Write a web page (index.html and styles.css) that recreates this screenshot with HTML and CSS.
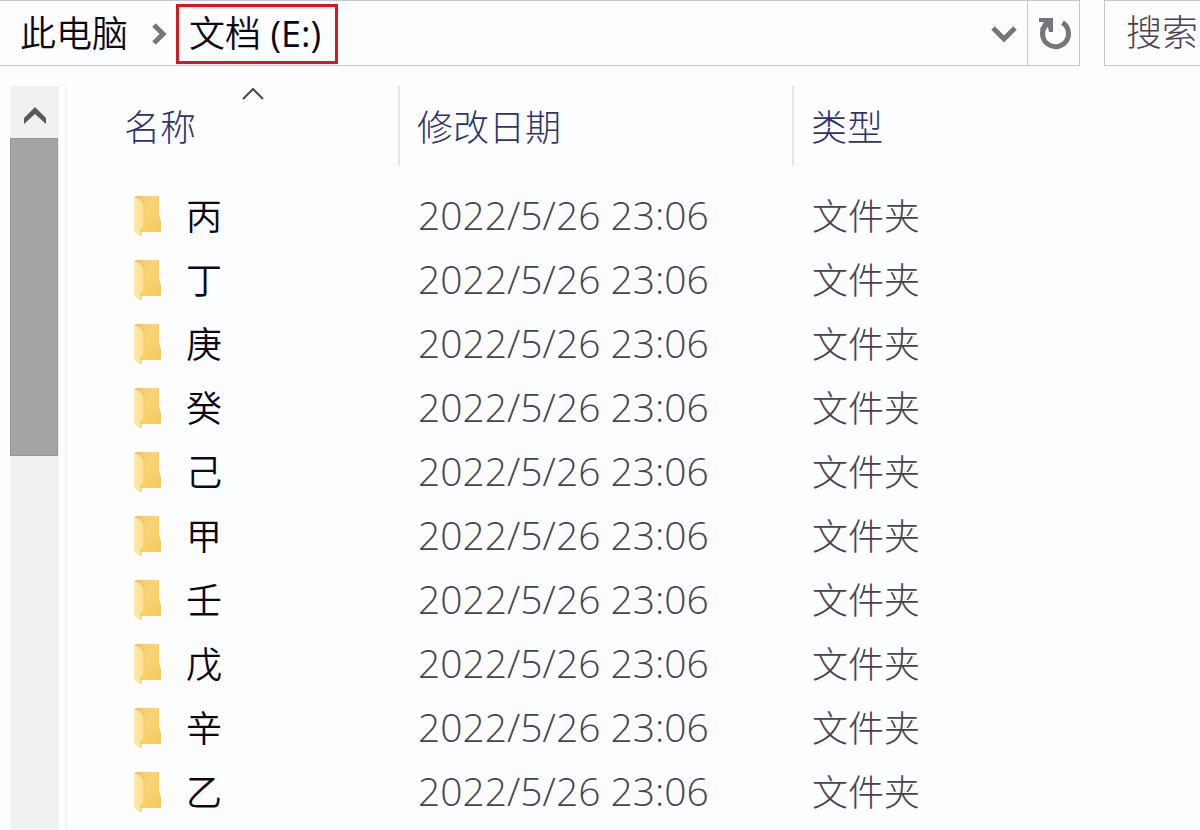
FILE: index.html
```html
<!DOCTYPE html>
<html lang="zh-CN">
<head>
<meta charset="utf-8">
<title>文档 (E:)</title>
<link rel="stylesheet" href="styles.css">
</head>
<body>
<svg class="defs" aria-hidden="true">
  <defs>
    <linearGradient id="back" x1="0" y1="0" x2="1" y2="1"><stop offset="0" stop-color="#f0c75c"/><stop offset="0.4" stop-color="#fad478"/><stop offset="1" stop-color="#f6c85a"/></linearGradient>
    <linearGradient id="flap" x1="0" y1="0" x2="1" y2="0"><stop offset="0" stop-color="#ffe9a8"/><stop offset="1" stop-color="#fedf90"/></linearGradient>
    <symbol id="folder" viewBox="0 0 28 42">
      <path d="M1 0H25V19L27 25V36H4Z" fill="url(#back)"/>
      <path d="M0 1L7 4Q10 6 10 10V29Q9 33 7 34V41L0 36Z" fill="url(#flap)"/>
      <path d="M2 1L7 4Q10 6 10 10V29Q9 33 7 34V40" fill="none" stroke="#edc86e" stroke-width="1"/>
    </symbol>
  </defs>
</svg>
<div class="explorer">
  <header class="toolbar">
    <nav class="address" aria-label="地址">
      <button class="crumb" type="button">此电脑</button>
      <svg class="crumb-arrow" viewBox="0 0 16 22" aria-hidden="true"><path d="M3 2L12 11L3 20"/></svg>
      <button class="crumb crumb-marked" type="button">文档 <span class="drive">(E:)</span></button>
      <button class="history" type="button" aria-label="历史记录"><svg viewBox="0 0 28 18" aria-hidden="true"><path d="M3 3L14 14L25 3"/></svg></button>
      <button class="refresh" type="button" aria-label="刷新"><svg viewBox="0 0 32 32" aria-hidden="true"><path d="M23.5 4.7A13 13 0 1 1 6 8"/><path class="solid" d="M0 0H14V14H10L9 9L4 13L1 11L5 4H0Z"/></svg></button>
    </nav>
    <input class="search" type="text" aria-label="搜索" placeholder="搜索">
  </header>
  <div class="content">
    <div class="scrollbar">
      <button class="scroll-up" type="button" aria-label="向上滚动"><svg viewBox="0 0 24 20" aria-hidden="true"><path d="M1 12L12 1L23 12V18L12 8L1 18Z"/></svg></button>
      <div class="thumb"></div>
    </div>
    <main class="files">
      <table>
        <colgroup><col class="col-name"><col class="col-date"><col></colgroup>
        <thead>
          <tr>
            <th scope="col"><button class="head" type="button">名称<svg class="sort" viewBox="0 0 22 12" aria-hidden="true"><path d="M1 11L11 1L21 11"/></svg></button></th>
            <th scope="col"><button class="head" type="button">修改日期</button></th>
            <th scope="col"><button class="head" type="button">类型</button></th>
          </tr>
        </thead>
        <tbody>
          <tr><td><span class="name"><svg class="folder" aria-hidden="true"><use href="#folder"/></svg>丙</span></td><td class="date">2022/5/26 23:06</td><td>文件夹</td></tr>
          <tr><td><span class="name"><svg class="folder" aria-hidden="true"><use href="#folder"/></svg>丁</span></td><td class="date">2022/5/26 23:06</td><td>文件夹</td></tr>
          <tr><td><span class="name"><svg class="folder" aria-hidden="true"><use href="#folder"/></svg>庚</span></td><td class="date">2022/5/26 23:06</td><td>文件夹</td></tr>
          <tr><td><span class="name"><svg class="folder" aria-hidden="true"><use href="#folder"/></svg>癸</span></td><td class="date">2022/5/26 23:06</td><td>文件夹</td></tr>
          <tr><td><span class="name"><svg class="folder" aria-hidden="true"><use href="#folder"/></svg>己</span></td><td class="date">2022/5/26 23:06</td><td>文件夹</td></tr>
          <tr><td><span class="name"><svg class="folder" aria-hidden="true"><use href="#folder"/></svg>甲</span></td><td class="date">2022/5/26 23:06</td><td>文件夹</td></tr>
          <tr><td><span class="name"><svg class="folder" aria-hidden="true"><use href="#folder"/></svg>壬</span></td><td class="date">2022/5/26 23:06</td><td>文件夹</td></tr>
          <tr><td><span class="name"><svg class="folder" aria-hidden="true"><use href="#folder"/></svg>戊</span></td><td class="date">2022/5/26 23:06</td><td>文件夹</td></tr>
          <tr><td><span class="name"><svg class="folder" aria-hidden="true"><use href="#folder"/></svg>辛</span></td><td class="date">2022/5/26 23:06</td><td>文件夹</td></tr>
          <tr><td><span class="name"><svg class="folder" aria-hidden="true"><use href="#folder"/></svg>乙</span></td><td class="date">2022/5/26 23:06</td><td>文件夹</td></tr>
        </tbody>
      </table>
    </main>
  </div>
</div>
</body>
</html>
```
FILE: styles.css
```css
* { box-sizing: border-box; }

body {
  margin: 0;
  background: #fcfdff;
  color: #4a4252;
  font-family: "Open Sans", "Noto Sans CJK SC", sans-serif;
  font-size: 36px;
  font-weight: 300;
  line-height: 48px;
}

button {
  margin: 0;
  padding: 0;
  border: 0;
  background: none;
  color: inherit;
  font: inherit;
}

svg { display: block; }
.defs { position: absolute; width: 0; height: 0; }

.explorer {
  display: flex;
  flex-direction: column;
  height: 100vh;
  overflow: hidden;
}

.toolbar {
  display: flex;
  gap: 24px;
  flex: none;
  height: 66px;
}

.address {
  display: flex;
  flex: 1;
  align-items: center;
  border: 1px solid #c6c6cc;
  border-left: 0;
}

.crumb {
  padding: 2px 10px 0;
  margin-left: 10px;
  color: #0c0814;
  font-weight: 350;
  white-space: nowrap;
}

.crumb-arrow {
  width: 16px;
  height: 22px;
  margin: 2px 0 0 13px;
}

.crumb-arrow path,
.history path {
  fill: none;
  stroke: #77757a;
  stroke-width: 5;
}

.crumb-marked {
  height: 60px;
  padding: 0 14px 0 10px;
  margin-left: 9px;
  margin-top: 2px;
  border: 3px solid #d51a1c;
  line-height: 50px;
}

.drive { font-weight: 400; }

.history { margin: 2px 9px 0 auto; }
.history svg { width: 28px; height: 18px; }

.refresh {
  display: flex;
  align-items: center;
  justify-content: center;
  align-self: stretch;
  width: 52px;
  padding: 2px 0 0 3px;
  border-left: 1px solid #c6c6cc;
}

.refresh svg { width: 32px; height: 32px; overflow: visible; }
.refresh path { fill: none; stroke: #77757a; stroke-width: 5; }
.refresh .solid { fill: #77757a; stroke: none; }

.search {
  width: 96px;
  padding: 0 0 0 21px;
  border: 1px solid #c6c6cc;
  border-right: 0;
  border-radius: 0;
  background: transparent;
  color: #4a4252;
  font: inherit;
}

.search::placeholder { color: #4a4252; opacity: 1; }

.content {
  display: flex;
  flex: 1;
  min-height: 0;
  padding: 20px 0 0 10px;
}

.scrollbar {
  flex: none;
  width: 49px;
  background: #f0f1f3;
}

.scroll-up {
  display: flex;
  align-items: center;
  justify-content: center;
  width: 100%;
  height: 52px;
  padding-top: 8px;
}

.scroll-up svg { width: 24px; height: 20px; fill: #5b565c; }

.thumb {
  width: 48px;
  height: 318px;
  border: 1px solid #969698;
  background: #a4a4a6;
}

.files {
  flex: 1;
  margin-left: 6px;
  padding-left: 40px;
  border-left: 2px solid #f4f5f9;
}

table {
  width: 100%;
  border-collapse: collapse;
  table-layout: fixed;
}

.col-name { width: 293px; }
.col-date { width: 394px; }

th {
  height: 99px;
  padding: 0;
  font-weight: 300;
  text-align: left;
  vertical-align: top;
}

.head {
  position: relative;
  display: block;
  width: 100%;
  height: 80px;
  padding: 4px 0 0 17px;
  border-right: 2px solid #e4e5ea;
  color: #2d346b;
  text-align: left;
}

th:last-child .head { border-right: 0; }

.sort {
  position: absolute;
  top: 2px;
  left: 50%;
  width: 22px;
  height: 12px;
  margin-left: -11px;
}

.sort path { fill: none; stroke: #4a4650; stroke-width: 2; }

td {
  height: 64px;
  padding: 0 0 0 18px;
}

td:first-child { padding-left: 27px; }

.date {
  padding-bottom: 4px;
  font-size: 39px;
}

.name {
  display: flex;
  align-items: center;
  gap: 24px;
  color: #0c0814;
  font-weight: 350;
}

.folder { width: 28px; height: 42px; }
```
